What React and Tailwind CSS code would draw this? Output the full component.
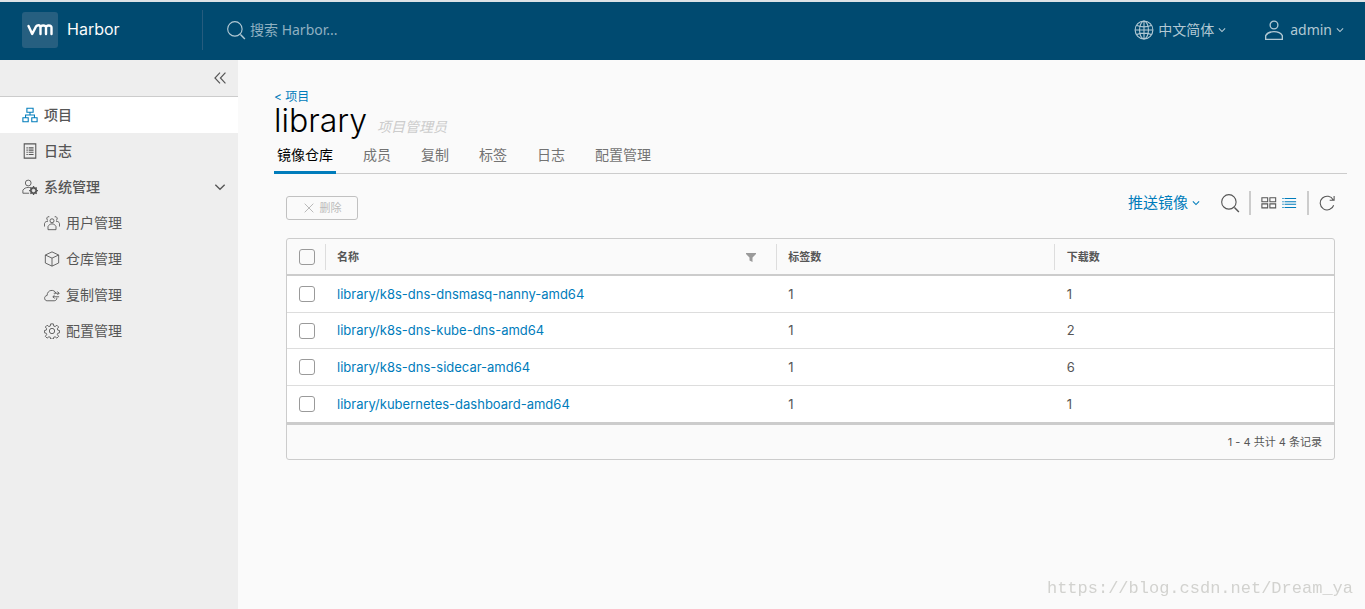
import React, { useState } from 'react';

const navChildren = [
  { id: 'users', label: '用户管理' },
  { id: 'registries', label: '仓库管理' },
  { id: 'replications', label: '复制管理' },
  { id: 'configs', label: '配置管理' },
];

const tabs = ['镜像仓库', '成员', '复制', '标签', '日志', '配置管理'];

const repositories = [
  { name: 'library/k8s-dns-dnsmasq-nanny-amd64', tags: 1, pulls: 1 },
  { name: 'library/k8s-dns-kube-dns-amd64', tags: 1, pulls: 2 },
  { name: 'library/k8s-dns-sidecar-amd64', tags: 1, pulls: 6 },
  { name: 'library/kubernetes-dashboard-amd64', tags: 1, pulls: 1 },
];

// All icons are drawn on a 36x36 grid
const shapes = {
  search: (
    <>
      <circle cx="16" cy="16" r="13" />
      <path d="M26 26l8 8" strokeWidth="2.6" />
    </>
  ),
  world: (
    <>
      <circle cx="18" cy="18" r="16" />
      <ellipse cx="18" cy="18" rx="8" ry="16" />
      <path d="M18 2v32M2 18h32M5 10c8 3 18 3 26 0M5 26c8-3 18-3 26 0" />
    </>
  ),
  user: (
    <>
      <circle cx="18" cy="9" r="7" />
      <path d="M3 35v-7c3-5 9-7 15-7s12 2 15 7v7z" />
    </>
  ),
  chevron: <path d="M4 11l14 14 14-14" />,
  collapse: <path d="M18 4L5 18l13 14M32 4L19 18l13 14" />,
  organization: <path d="M11 3h14v9H11zM2 24h12v9H2zM22 24h12v9H22zM18 12v6M8 24v-6h20v6" />,
  list: (
    <>
      <path d="M5 2h26v32H5z" />
      <path d="M10 11h3M15 11h11M10 16h3M15 16h11M10 21h3M15 21h11M10 26h3M15 26h11" />
    </>
  ),
  administrator: (
    <>
      <circle cx="14" cy="9" r="6.5" />
      <path d="M16 32H2v-7c3-4 7-6 12-6 2 0 4 0 6 1" />
      <circle cx="26" cy="26" r="5.500" strokeWidth="5" />
      <path d="M26 16v20M16 26h20M19 19l14 14M33 19L19 33" strokeWidth="3" />
      <circle cx="26" cy="26" r="3" fill="#eee" stroke="#eee" />
    </>
  ),
  users: (
    <>
      <circle cx="18" cy="13" r="4.500" />
      <path d="M9 33v-7c2-4 5-6 9-6s7 2 9 6v7z" />
      <path d="M12 4a4 4 0 1 0-3 8M24 4a4 4 0 1 1 3 8M1 26v-7c1-3 4-5 8-5M35 26v-7c-1-3-4-5-8-5" />
    </>
  ),
  registries: <path d="M18 2l15 7v18l-15 7-15-7V9zM3 9l15 7 15-7M18 16v18" />,
  replications: (
    <>
      <path d="M29 24c0 4-2 7-6 7H7c-7 0-8-11 0-12 0-13 16-15 20-5" />
      <path d="M22 14h12M30 10l4 4-4 4M34 22H20M24 18l-4 4 4 4" />
    </>
  ),
  configs: (
    <>
      <circle cx="18" cy="18" r="6" />
      <path d="M15 2h6l1 5 3 1 4-3 4 4-3 4 1 3 4 1v5l-4 1-1 3 3 4-4 4-4-3-3 1-1 4h-6l-1-4-3-1-4 3-4-4 3-4-1-3-4-1v-5l4-1 1-3-3-4 4-4 4 3 3-1z" />
    </>
  ),
  close: <path d="M5 5l26 26M31 5L5 31" />,
  grid: <path d="M2 6h13v9H2zM20 6h13v9H20zM2 20h13v9H2zM20 20h13v9H20z" />,
  rows: <path d="M3 8h3M8 8h26M3 15h3M8 15h26M3 21h3M8 21h26M3 28h3M8 28h26" />,
  refresh: <path d="M33 23a15.500 15.500 0 1 1-1-12M34 2v10H24" />,
};

const Icon = ({ name, className = '', stroke = 2 }) => (
  <svg viewBox="0 0 36 36" fill="none" stroke="currentColor" strokeWidth={stroke} className={`shrink-0 ${className}`} aria-hidden="true">
    {shapes[name]}
  </svg>
);

const Header = () => (
  <header className="h-[60px] pb-[2px] border-t-2 border-[#dde3e6] bg-[#004a70] flex items-center text-[#b2c9d4]">
    <a href="#home" className="flex items-center w-[202px] pl-[22px]">
      <span className="w-9 h-9 rounded-[3px] bg-[#265f80] flex items-center justify-center">
        <svg viewBox="0 0 26 12" className="w-[26px] h-3" fill="none" stroke="#fff" strokeWidth="2.400" strokeLinecap="round" strokeLinejoin="round" aria-label="VMware">
          <path d="M1.500 2l3.700 8L9 2.500q.8-1.200 2.500-1.200 2 0 2 2.500V10M13.500 4q0-2.500 2.800-2.500T19 4v6M19 4q0-2.500 2.800-2.500T24.500 4v6" />
        </svg>
      </span>
      <span className="ml-[9px] pb-[2px] text-base text-[#fafafa]">Harbor</span>
    </a>
    <form className="h-10 border-l border-[#265c7e] pl-[23px] flex items-center flex-1">
      <Icon name="search" className="w-5 h-5" />
      <input type="text" aria-label="搜索" placeholder="搜索 Harbor..." className="ml-1 w-64 bg-transparent text-sm font-['Noto_Sans','Noto_Sans_CJK_SC',sans-serif] placeholder:text-[#8fb0c1] outline-none" />
    </form>
    <div className="flex items-center gap-[38px] pr-[21px] text-sm font-['Noto_Sans','Noto_Sans_CJK_SC',sans-serif]">
      <button type="button" className="flex items-center">
        <Icon name="world" className="w-5 h-5 mr-1" />
        中文简体
        <Icon name="chevron" className="w-2 h-2 ml-1" stroke={5} />
      </button>
      <button type="button" className="flex items-center">
        <Icon name="user" className="w-5 h-5 mr-[6px]" stroke={2.4} />
        admin
        <Icon name="chevron" className="w-2 h-2 ml-1" stroke={5} />
      </button>
    </div>
  </header>
);

const Sidebar = () => {
  const [open, setOpen] = useState(true);

  return (
    <nav className="w-[238px] shrink-0 bg-[#eee] text-sm text-[#565656]">
      <div className="h-[37px] border-b border-[#ccc] flex items-center justify-end pr-[11px]">
        <button type="button" aria-label="折叠">
          <Icon name="collapse" className="w-[14px] h-[14px]" stroke={3} />
        </button>
      </div>
      <a href="#projects" className="h-9 pl-[22px] flex items-center bg-white font-medium">
        <Icon name="organization" className="w-4 h-4 mr-[6px] text-[#007cbb]" stroke={2.4} />
        项目
      </a>
      <a href="#logs" className="h-9 pl-[22px] flex items-center font-medium">
        <Icon name="list" className="w-4 h-4 mr-[6px]" stroke={2.4} />
        日志
      </a>
      <button type="button" onClick={() => setOpen(!open)} className="h-9 w-full pl-[22px] pr-3 flex items-center font-medium">
        <Icon name="administrator" className="w-4 h-4 mr-[6px]" />
        系统管理
        <Icon name="chevron" className="w-3 h-3 ml-auto" stroke={4} />
      </button>
      {open && navChildren.map((item) => (
        <a key={item.id} href={`#${item.id}`} className="h-9 pl-11 flex items-center">
          <Icon name={item.id} className="w-4 h-4 mr-[6px]" />
          {item.label}
        </a>
      ))}
    </nav>
  );
};

const Toolbar = () => (
  <div className="flex items-start justify-between pt-[17px]">
    <button type="button" disabled className="w-[72px] h-6 mt-[5px] border border-[#c1c1c1] rounded-[3px] flex items-center justify-center text-[11px] text-[#bababa]">
      <Icon name="close" className="w-3 h-3 mr-[5px]" stroke={3} />
      删除
    </button>
    <div className="flex items-center text-[#565656]">
      <button type="button" className="flex items-center text-[#007cbb] text-[15px]">
        推送镜像
        <Icon name="chevron" className="w-2 h-2 ml-1" stroke={5} />
      </button>
      <button type="button" aria-label="搜索" className="ml-5">
        <Icon name="search" className="w-5 h-5" />
      </button>
      <div className="h-6 ml-[9px] px-[10px] border-x-2 border-[#ccc] flex items-center gap-1">
        <button type="button" aria-label="卡片视图">
          <Icon name="grid" className="w-4 h-4" stroke={2.4} />
        </button>
        <button type="button" aria-label="列表视图" className="text-[#007cbb]">
          <Icon name="rows" className="w-4 h-4" stroke={2.4} />
        </button>
      </div>
      <button type="button" aria-label="刷新" className="ml-[10px]">
        <Icon name="refresh" className="w-4 h-4" stroke={2.4} />
      </button>
    </div>
  </div>
);

const Checkbox = ({ label }) => (
  <input type="checkbox" aria-label={label} className="block appearance-none w-4 h-4 ml-3 border border-[#9a9a9a] rounded-[3px] checked:bg-[#007cbb]" />
);

const RepositoryTable = () => (
  <div className="mt-[18px] border border-[#ccc] rounded-[3px]">
    <table className="w-full table-fixed border-separate border-spacing-0 text-left text-[13px] text-[#565656]">
      <colgroup>
        <col className="w-[38px]" />
        <col className="w-[43.1%]" />
        <col className="w-[26.5%]" />
        <col />
      </colgroup>
      <thead>
        <tr className="h-[37px] text-[11px]">
          <th className="p-0 border-b-2 border-[#ccc]">
            <Checkbox label="全选" />
          </th>
          <th className="p-0 border-b-2 border-[#ccc] font-bold">
            <div className="h-[26px] border-l border-[#ddd] pl-[11px] pr-5 pt-px flex items-center justify-between">
              名称
              <button type="button" aria-label="过滤">
                <svg viewBox="0 0 10 9" className="w-[10px] h-[9px]" fill="#9a9a9a">
                  <path d="M0 0h10v1L6.500 4.500V9L3.500 7.500v-3L0 1z" />
                </svg>
              </button>
            </div>
          </th>
          <th className="p-0 border-b-2 border-[#ccc] font-bold">
            <div className="h-[26px] border-l border-[#ddd] pl-[11px] pt-px flex items-center">标签数</div>
          </th>
          <th className="p-0 border-b-2 border-[#ccc] font-bold">
            <div className="h-[26px] border-l border-[#ddd] pl-3 pt-px flex items-center">下载数</div>
          </th>
        </tr>
      </thead>
      <tbody className="bg-white">
        {repositories.map((repo) => (
          <tr key={repo.name} className="group odd:h-[37px] even:h-9">
            <td className="p-0 border-b border-[#ddd] group-last:border-b-0">
              <Checkbox label={repo.name} />
            </td>
            <td className="pt-px pb-0 pl-3 pr-0 border-b border-[#ddd] group-last:border-b-0">
              <a href={`#${repo.name}`} className="text-[#007cbb]">{repo.name}</a>
            </td>
            <td className="pt-px pb-0 pl-3 pr-0 border-b border-[#ddd] group-last:border-b-0">{repo.tags}</td>
            <td className="pt-px pb-0 pl-[13px] pr-0 border-b border-[#ddd] group-last:border-b-0">{repo.pulls}</td>
          </tr>
        ))}
      </tbody>
    </table>
    <div className="h-[37px] border-t-3 border-[#ccc] pr-3 flex items-center justify-end text-[11px] text-[#565656]">
      1 - 4 共计 4 条记录
    </div>
  </div>
);

const App = () => {
  const [activeTab, setActiveTab] = useState(tabs[0]);

  return (
    <div className="min-h-screen flex flex-col bg-[#fafafa] font-['Inter','Noto_Sans_CJK_SC',sans-serif]">
      <Header />
      <div className="flex flex-1">
        <Sidebar />
        <main className="flex-1 min-w-0 pl-9 pr-[18px] pt-[29px]">
          <a href="#projects" className="block w-fit text-xs leading-4 text-[#007cbb]">&lt; 项目</a>
          <div className="flex items-baseline gap-[10px] h-8">
            <h1 className="text-[32px] leading-8 font-light text-black">library</h1>
            <span className="text-sm italic text-[#ccc]">项目管理员</span>
          </div>

          {/* Tabs */}
          <div role="tablist" className="mt-[2px] h-[35px] border-b border-[#ccc] flex gap-6 text-sm text-[#737373]">
            {tabs.map((tab) => (
              <button
                key={tab}
                type="button"
                role="tab"
                aria-selected={tab === activeTab}
                onClick={() => setActiveTab(tab)}
                className={tab === activeTab ? 'h-[35px] px-[3px] border-b-3 border-[#007cbb] text-black' : 'h-[35px] px-[3px] border-b-3 border-transparent'}
              >
                {tab}
              </button>
            ))}
          </div>

          <div className="px-3">
            <Toolbar />
            <RepositoryTable />
          </div>
        </main>
      </div>
      <div className="fixed right-3 bottom-2 text-[17px] font-['Liberation_Mono',monospace] text-[#d2d2cf]">
        https://blog.csdn.net/Dream_ya
      </div>
    </div>
  );
};

export default App;
